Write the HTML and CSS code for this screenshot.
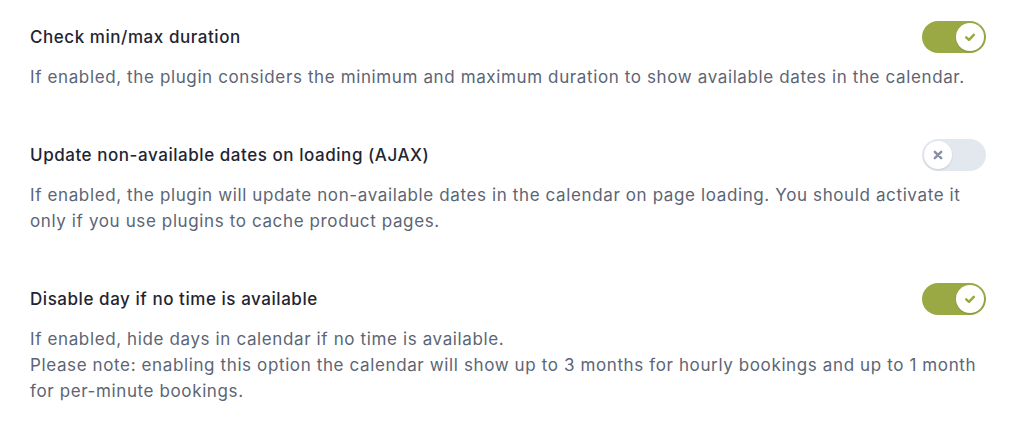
FILE: index.html
```html
<!DOCTYPE html>
<html lang="en">
<head>
<meta charset="UTF-8">
<meta name="viewport" content="width=device-width, initial-scale=1.0">
<title>Calendar options</title>
<link rel="stylesheet" href="styles.css">
</head>
<body>
<div class="options">
    <div class="option">
        <div class="option-head">
            <span class="option-title">Check min/max duration</span>
            <span class="toggle on">
                <span class="knob">
                    <svg viewBox="0 0 14 14" width="14" height="14"><path d="M3.2 7.3 L6 9.9 L10.8 4.8" fill="none" stroke="currentColor" stroke-width="2.5" stroke-linecap="round" stroke-linejoin="round"/></svg>
                </span>
            </span>
        </div>
        <p class="option-desc">If enabled, the plugin considers the minimum and maximum duration to show available dates in the calendar.</p>
    </div>

    <div class="option">
        <div class="option-head">
            <span class="option-title">Update non-available dates on loading (AJAX)</span>
            <span class="toggle">
                <span class="knob">
                    <svg viewBox="0 0 14 14" width="14" height="14"><path d="M3.8 3.8 L10.2 10.2 M10.2 3.8 L3.8 10.2" fill="none" stroke="currentColor" stroke-width="2.5" stroke-linecap="round"/></svg>
                </span>
            </span>
        </div>
        <p class="option-desc">If enabled, the plugin will update non-available dates in the calendar on page loading. You should activate it only if you use plugins to cache product pages.</p>
    </div>

    <div class="option">
        <div class="option-head">
            <span class="option-title">Disable day if no time is available</span>
            <span class="toggle on">
                <span class="knob">
                    <svg viewBox="0 0 14 14" width="14" height="14"><path d="M3.2 7.3 L6 9.9 L10.8 4.8" fill="none" stroke="currentColor" stroke-width="2.5" stroke-linecap="round" stroke-linejoin="round"/></svg>
                </span>
            </span>
        </div>
        <p class="option-desc">If enabled, hide days in calendar if no time is available.<br>Please note: enabling this option the calendar will show up to 3 months for hourly bookings and up to 1 month for per-minute bookings.</p>
    </div>
</div>
</body>
</html>
```

FILE: styles.css
```css
body {
    margin: 0;
    background: #fff;
    font-family: Inter, "Noto Sans", sans-serif;
}
.options {
    padding: 21px 38px 0 30px;
    display: flex;
    flex-direction: column;
    gap: 49px;
}
.option-head {
    display: flex;
    justify-content: space-between;
    align-items: center;
    height: 32px;
}
.option-title {
    font-size: 17px;
    font-weight: 500;
    letter-spacing: 0.55px;
    color: #1f2533;
}
.option-desc {
    margin: 11px 0 0 0;
    font-size: 17px;
    line-height: 26px;
    letter-spacing: 0.62px;
    color: #5c6575;
}
.toggle {
    width: 64px;
    height: 32px;
    border-radius: 16px;
    background: #e3e8ef;
    display: flex;
    align-items: center;
    padding: 0 2px;
    box-sizing: border-box;
}
.toggle.on {
    background: #9aa944;
    justify-content: flex-end;
}
.knob {
    width: 28px;
    height: 28px;
    border-radius: 50%;
    background: #fff;
    display: flex;
    align-items: center;
    justify-content: center;
    color: #8891a6;
    box-shadow: 0 1px 2px rgba(0,0,0,0.12);
}
.toggle.on .knob {
    color: #9aa944;
}
```
